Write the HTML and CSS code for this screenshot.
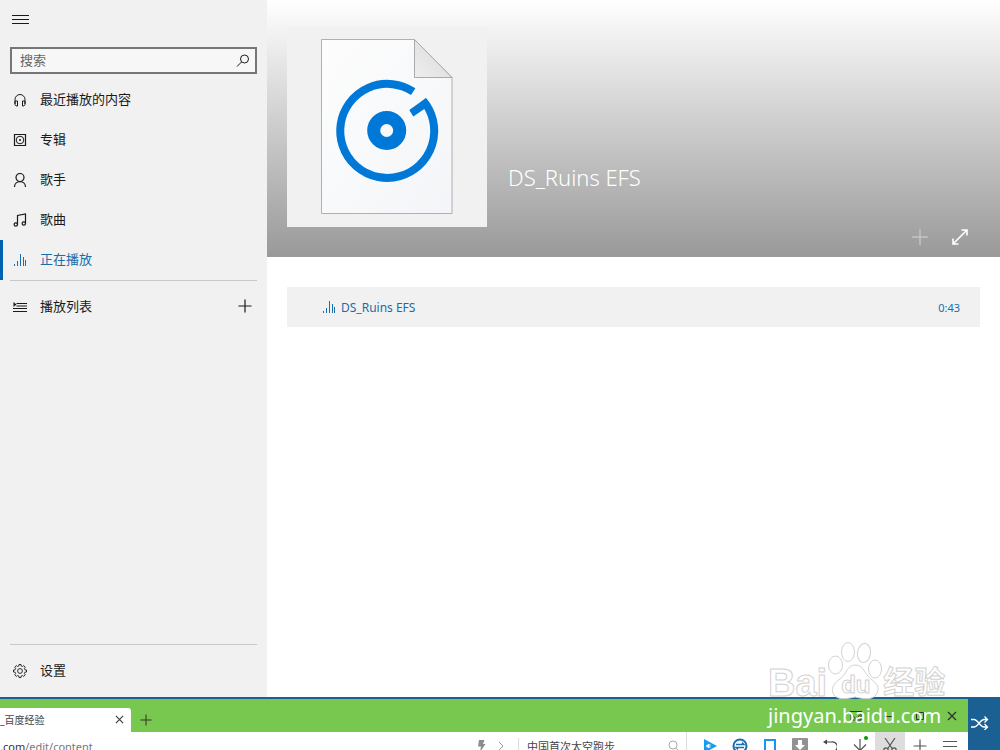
FILE: index.html
```
<!DOCTYPE html>
<html lang="zh-CN">
<head>
<meta charset="utf-8">
<meta name="viewport" content="width=device-width, initial-scale=1.0">
<title>DS_Ruins EFS</title>
<link rel="stylesheet" href="styles.css">
</head>
<body>
<svg class="defs" aria-hidden="true">
    <symbol id="bars" viewBox="0 0 14 14"><path d="M1.5 11v2M4.500 8v5M7.500 1v12M10.500 4v9M12.500 7v6" fill="none" stroke="currentColor"/></symbol>
    <symbol id="plus" viewBox="0 0 14 14"><path d="M7 .5v13M.5 7h13" fill="none" stroke="currentColor" stroke-width="1.2"/></symbol>
    <symbol id="cross" viewBox="0 0 10 10"><path d="M1 1l8 8M9 1L1 9" fill="none" stroke="currentColor" stroke-width="1.4"/></symbol>
</svg>

<div class="player">
    <aside class="sidebar">
        <button class="menu-button" type="button" aria-label="菜单">
            <svg width="18" height="12" viewBox="0 0 18 12"><path d="M1 1.5h17M1 5.5h17M1 9.5h17" fill="none" stroke="currentColor" stroke-width="1.2"/></svg>
        </button>
        <form class="search">
            <input type="text" placeholder="搜索" aria-label="搜索">
            <button type="submit" aria-label="开始搜索">
                <svg width="14" height="14" viewBox="0 0 14 14"><g fill="none" stroke="currentColor"><circle cx="8.5" cy="5" r="4"/><path d="M5.5 8L1 12.5"/></g></svg>
            </button>
        </form>
        <nav class="nav">
            <a href="#recent">
                <svg width="14" height="14" viewBox="0 0 14 14"><g fill="none" stroke="currentColor"><path d="M2 11V6.500a5 5 0 0 1 10 0V11"/><path d="M2 8h2.500v5H3.200L2 11.500zM12 8H9.500v5h1.300L12 11.500z"/></g></svg>
                最近播放的内容
            </a>
            <a href="#albums">
                <svg width="14" height="14" viewBox="0 0 14 14"><g fill="none" stroke="currentColor"><path d="M1.500 1.500h11v11h-11z" stroke-width="1.200"/><circle cx="7" cy="7" r="3.800"/></g><circle cx="7" cy="7" r="1" fill="currentColor"/></svg>
                专辑
            </a>
            <a href="#artists">
                <svg width="14" height="14" viewBox="0 0 14 14"><g fill="none" stroke="currentColor" stroke-width="1.200"><circle cx="7" cy="4.500" r="4"/><path d="M1.500 14c0-7 11-7 11 0"/></g></svg>
                歌手
            </a>
            <a href="#songs">
                <svg width="14" height="14" viewBox="0 0 14 14"><g fill="none" stroke="currentColor" stroke-width="1.200"><path d="M4.500 11.500v-9l8-1.500v9"/><circle cx="2.800" cy="11.500" r="1.700"/><circle cx="10.800" cy="10.500" r="1.700"/></g></svg>
                歌曲
            </a>
            <a href="#now" class="active">
                <svg width="14" height="14"><use href="#bars"/></svg>
                正在播放
            </a>
        </nav>
        <div class="playlists">
            <a href="#playlists">
                <svg width="14" height="14" viewBox="0 0 14 14"><path d="M3.500 3.500H14M3.500 6H14M0 8.500h14M0 11.500h14" fill="none" stroke="currentColor"/><path d="M.5 2l3 2.500-3 2.500z" fill="currentColor"/></svg>
                播放列表
            </a>
            <button type="button" aria-label="新建播放列表"><svg width="14" height="14"><use href="#plus"/></svg></button>
        </div>
        <div class="settings">
            <a href="#settings">
                <svg width="14" height="14" viewBox="0 0 14 14"><g fill="none" stroke="currentColor" stroke-width=".9"><path d="M5.800 2L6 .5h2L8.200 2l1.300.5 1.200-.9 1.600 1.600-.9 1.300.5 1.300 1.600.2v2l-1.600.2-.5 1.300.9 1.300-1.600 1.600-1.200-.9-1.300.5L8 13.500H6L5.800 12l-1.300-.5-1.200.9-1.600-1.600.9-1.300-.5-1.300L.5 8V6l1.600-.2.5-1.300-.9-1.300 1.600-1.600 1.200.9z"/><circle cx="7" cy="7" r="2.400"/></g></svg>
                设置
            </a>
        </div>
    </aside>

    <main class="content">
        <header class="hero">
            <div class="cover">
                <svg width="134" height="178" viewBox="0 0 134 178">
                    <defs>
                        <linearGradient id="paper" x1="0" y1="0" x2="1" y2="1"><stop offset="0" stop-color="#fdfdfd"/><stop offset="1" stop-color="#f3f5f8"/></linearGradient>
                        <linearGradient id="fold" x1="0" y1="1" x2="1" y2="0"><stop offset="0" stop-color="#eee"/><stop offset="1" stop-color="#d8d8d8"/></linearGradient>
                    </defs>
                    <path d="M1.500 1.500h93l37.500 38v136H1.500z" fill="url(#paper)" stroke="#b0b0b0"/>
                    <path d="M94.500 1.500v38H132z" fill="url(#fold)" stroke="#aaa"/>
                    <path d="M93.200 53.700A47 47 0 1 0 103.100 62.500" fill="none" stroke="#0078d7" stroke-width="8"/>
                    <path d="M106 60L89.300 72l4 6.500 11.700-8z" fill="#0078d7"/>
                    <circle cx="66.700" cy="92.500" r="13" fill="none" stroke="#0078d7" stroke-width="13"/>
                </svg>
            </div>
            <h1>DS_Ruins EFS</h1>
            <div class="hero-actions">
                <button class="add" type="button" aria-label="添加"><svg width="18" height="18" viewBox="0 0 18 18"><path d="M9 1v16M1 9h16" fill="none" stroke="currentColor" stroke-width="1.500"/></svg></button>
                <button type="button" aria-label="全屏"><svg width="18" height="18" viewBox="0 0 18 18"><path d="M2 16L16 2M10.500 2H16v5.500M2 10.500V16h5.500" fill="none" stroke="currentColor" stroke-width="1.600"/></svg></button>
            </div>
        </header>
        <ul class="tracks">
            <li>
                <svg width="14" height="14"><use href="#bars"/></svg>
                <span class="name">DS_Ruins EFS</span>
                <span class="time">0:43</span>
            </li>
        </ul>
    </main>
</div>

<div class="bottom">
    <div class="browser">
        <div class="tabs">
            <div class="tab"><a href="#tab">_百度经验</a><button type="button" aria-label="关闭标签"><svg width="9" height="9"><use href="#cross"/></svg></button></div>
            <button class="new-tab" type="button" aria-label="新标签"><svg width="12" height="12"><use href="#plus"/></svg></button>
            <div class="window-buttons">
                <button type="button" aria-label="皮肤"><svg width="12" height="10" viewBox="0 0 12 10"><path d="M0 .5h12M2 3.500l4 5 4-5M1 2v7h10V2" fill="none" stroke="currentColor"/></svg></button>
                <button type="button" aria-label="最小化"><svg width="10" height="10" viewBox="0 0 10 10"><path d="M1 5.500h8" stroke="currentColor"/></svg></button>
                <button type="button" aria-label="还原"><svg width="10" height="10" viewBox="0 0 10 10"><path d="M1.500 1.500h7v7h-7z" fill="none" stroke="currentColor"/></svg></button>
                <button type="button" aria-label="关闭"><svg width="10" height="10"><use href="#cross"/></svg></button>
            </div>
        </div>
        <div class="toolbar">
            <div class="address"><b>.com</b>/edit/content</div>
            <svg width="9" height="12" viewBox="0 0 9 12"><path d="M2 0h5.500L6 4h2.500L3 12l1-5.500H1z" fill="#8c8c8c"/></svg>
            <svg class="chevron" width="6" height="10" viewBox="0 0 6 10"><path d="M1 1l4 4-4 4" fill="none" stroke="#999"/></svg>
            <div class="hot">中国首次太空跑步</div>
            <svg class="find" width="11" height="12" viewBox="0 0 11 12"><g fill="none" stroke="#aaa"><circle cx="5" cy="5" r="4"/><path d="M8 8l3 3"/></g></svg>
            <div class="tools">
                <button type="button" aria-label="播放"><svg width="14" height="14" viewBox="0 0 14 14"><path d="M1 0l13 7-13 7z" fill="#149cf3"/><path d="M3 7l3-2v4zM7 5v4" fill="#fff" stroke="#fff" stroke-width=".7"/></svg></button>
                <button type="button" aria-label="代理"><svg width="16" height="16" viewBox="0 0 16 16"><g fill="none" stroke="#196fab"><circle cx="8" cy="8" r="6.500" stroke-width="2"/><path d="M4 6.500h8l-2-2M12 9.500H4l2 2" stroke-width="1.400"/></g></svg></button>
                <button type="button" aria-label="手机"><svg width="12" height="16" viewBox="0 0 12 16"><path d="M1 2h10v13H1z" fill="none" stroke="#1598f5" stroke-width="2"/><path d="M1 14h10" stroke="#1598f5" stroke-width="3"/></svg></button>
                <button type="button" aria-label="下载"><svg width="16" height="16" viewBox="0 0 16 16"><rect width="16" height="16" rx="1" fill="#929292"/><path d="M6 2h4v5h3l-5 5-5-5h3z" fill="#fff"/></svg></button>
                <button type="button" aria-label="撤销"><svg width="14" height="14" viewBox="0 0 14 14"><path d="M2 3h6.500a4.800 4.800 0 0 1 2 9.500" fill="none" stroke="#444" stroke-width="1.200"/><path d="M0 3L4 .5v5z" fill="#444"/></svg></button>
                <button class="dot" type="button" aria-label="下载列表"><svg width="14" height="14" viewBox="0 0 14 14"><path d="M7 0v11M1 5.500l6 6 6-6" fill="none" stroke="#555" stroke-width="1.200"/></svg></button>
                <button class="pressed" type="button" aria-label="截图"><svg width="14" height="16" viewBox="0 0 14 16"><g fill="none" stroke="#555" stroke-width="1.200"><path d="M2 0l7.500 11M12 0L4.500 11"/><circle cx="3" cy="12" r="2.200"/><circle cx="11" cy="12" r="2.200"/></g></svg></button>
                <button type="button" aria-label="扩展"><svg width="14" height="14" color="#555"><use href="#plus"/></svg></button>
                <button type="button" aria-label="更多"><svg width="14" height="14" viewBox="0 0 14 14"><path d="M0 2.500h14M0 7.500h14M0 12.500h14" stroke="#555"/></svg></button>
            </div>
        </div>
    </div>
    <button class="shuffle" type="button" aria-label="随机播放">
        <svg width="18" height="14" viewBox="0 0 18 14"><path d="M0 3.500h3c4 0 6 7.500 10 7.500h3M0 11h3c4 0 6-7.500 10-7.500h3M13.500.5l3 3-3 3M13.500 8l3 3-3 3" fill="none" stroke="#fff" stroke-width="1.300"/></svg>
    </button>
</div>

<div class="watermark">
    <div class="brand">
        <span>Bai</span>
        <span class="paw">
            <svg width="56" height="60" viewBox="0 0 56 60"><g fill="#fff" stroke="#d2d2d2"><ellipse cx="8.500" cy="24" rx="7" ry="9"/><ellipse cx="21" cy="11" rx="6.500" ry="9.500"/><ellipse cx="37" cy="12" rx="6.500" ry="9.500" transform="rotate(8 37 12)"/><ellipse cx="48" cy="28" rx="6.500" ry="9"/><path d="M28 24c9 0 9 9 16 14s9 10 5 16c-4 5-12 4-21 2-9 2-17 3-21-2-4-6 0-12 6-16s7-14 15-14z"/></g></svg>
            <span class="du">du</span>
        </span>
        <span class="exp">经验</span>
    </div>
    <div class="site">jingyan.baidu.com</div>
</div>
</body>
</html>
```
FILE: styles.css
```
* {
    box-sizing: border-box;
}

body {
    margin: 0;
    height: 100vh;
    display: flex;
    flex-direction: column;
    overflow: hidden;
    background: #fff;
    color: #1a1a1a;
    font-family: "Noto Sans", "Noto Sans CJK SC", sans-serif;
    font-size: 13px;
}

button {
    display: flex;
    align-items: center;
    justify-content: center;
    padding: 0;
    border: 0;
    background: none;
    color: inherit;
}

a {
    color: inherit;
    text-decoration: none;
}

svg {
    display: block;
    flex: none;
}

.defs {
    position: absolute;
    width: 0;
    height: 0;
}

.player {
    flex: 1;
    display: flex;
    min-height: 0;
}

/* sidebar */
.sidebar {
    width: 267px;
    flex: none;
    display: flex;
    flex-direction: column;
    background: #f1f1f1;
    font-family: "Noto Sans CJK SC", sans-serif;
}

.menu-button {
    width: 40px;
    height: 40px;
}

.search {
    display: flex;
    height: 27px;
    margin: 7px 10px 6px;
    border: 2px solid #767676;
    background: #f7f7f7;
}

.search input {
    flex: 1;
    min-width: 0;
    padding: 0 8px 2px;
    border: 0;
    outline: 0;
    background: none;
    font: inherit;
}

.search input::placeholder {
    color: #666;
}

.search button {
    width: 24px;
}

.sidebar a {
    flex: 1;
    display: flex;
    align-items: center;
    gap: 13px;
    height: 40px;
    padding: 0 0 3px 13px;
}

.sidebar a svg {
    margin-top: 2px;
}

.nav .active {
    padding-left: 10px;
    border-left: 3px solid #0063b1;
    color: #1a6cab;
}

.playlists,
.settings {
    display: flex;
    margin: 0 10px;
    padding-top: 6px;
    border-top: 1px solid #c8c8c8;
}

.playlists a,
.settings a {
    padding-left: 3px;
}

.playlists button {
    width: 25px;
    padding-bottom: 2px;
}

.settings {
    margin-top: auto;
    padding-bottom: 6px;
}

/* main area */
.content {
    flex: 1;
    min-width: 0;
}

.hero {
    display: flex;
    height: 257px;
    padding: 27px 20px 0;
    background: linear-gradient(#fff, #999);
    color: #fff;
}

.cover {
    display: flex;
    justify-content: center;
    width: 200px;
    height: 200px;
    padding-top: 11px;
    background: #f1f1f1;
}

.hero h1 {
    flex: 1;
    margin: 134px 0 0 21px;
    font-size: 22px;
    line-height: 32px;
    font-weight: 300;
}

.hero-actions {
    display: flex;
    align-self: flex-end;
}

.hero-actions button {
    width: 40px;
    height: 40px;
}

.hero-actions .add {
    color: #c4c4c4;
}

.tracks {
    margin: 30px 20px;
    padding: 0;
    list-style: none;
    color: #1a6cab;
}

.tracks li {
    display: flex;
    align-items: center;
    height: 40px;
    padding: 0 20px 0 35px;
    background: #f1f1f1;
}

.tracks .name {
    flex: 1;
    margin-left: 5px;
    font-size: 12px;
}

.tracks .time {
    font-size: 11px;
}

/* browser window along the bottom edge */
.bottom {
    display: flex;
    height: 53px;
    border-top: 2px solid #1a6093;
    background: #1a6093;
}

.browser {
    flex: 1;
    min-width: 0;
    background: #fff;
    color: #333;
    overflow: hidden;
}

.tabs {
    display: flex;
    align-items: flex-end;
    height: 33px;
    background: #78c850;
}

.tab {
    display: flex;
    align-items: center;
    justify-content: space-between;
    width: 131px;
    height: 24px;
    padding: 0 7px 1px 0;
    border-top-right-radius: 3px;
    background: #fff;
    font-size: 10px;
    color: #444;
}

.new-tab {
    width: 29px;
    height: 24px;
}

.window-buttons {
    display: flex;
    margin-left: auto;
}

.window-buttons button {
    width: 32px;
    height: 33px;
}

.toolbar {
    display: flex;
    align-items: center;
    height: 28px;
    font-size: 11px;
    color: #777;
}

.address {
    width: 477px;
}

.address b {
    font-weight: 400;
    color: #333;
}

.chevron {
    margin-left: 12px;
}

.hot {
    flex: 1;
    margin-left: 14px;
    padding-left: 8px;
    border-left: 1px solid #ddd;
    color: #444;
}

.find {
    margin-right: 7px;
}

.tools {
    display: flex;
    padding-right: 3px;
    border-left: 1px solid #ddd;
    padding-left: 8px;
}

.tools button {
    position: relative;
    width: 30px;
    height: 28px;
}

.tools .pressed {
    background: #ddd;
}

.dot::after {
    content: "";
    position: absolute;
    top: 4px;
    right: 7px;
    width: 4px;
    height: 4px;
    border-radius: 50%;
    background: #00a000;
}

.shuffle {
    width: 32px;
    padding: 0 9px 4px 0;
}

/* watermark over both windows */
.watermark {
    position: absolute;
    right: 54px;
    bottom: 20px;
    width: 178px;
    pointer-events: none;
    color: #fff;
}

.brand {
    display: flex;
    align-items: flex-end;
    height: 60px;
    font: bold 38px/36px "Liberation Sans", "Noto Sans CJK SC", sans-serif;
    -webkit-text-stroke: 1px #d2d2d2;
}

.exp {
    font-size: 31px;
}

.paw {
    position: relative;
}

.du {
    position: absolute;
    left: 14px;
    bottom: 0;
    font-size: 24px;
    line-height: 32px;
}

.site {
    font-size: 20px;
    line-height: 29px;
}
```
